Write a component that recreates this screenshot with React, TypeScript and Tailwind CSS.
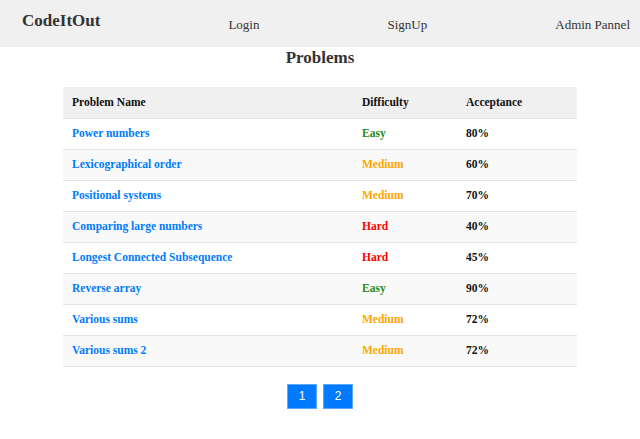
import React from "react";

const rows: { name: string; diff: "Easy" | "Medium" | "Hard"; acc: string }[] = [
  { name: "Power numbers", diff: "Easy", acc: "80%" },
  { name: "Lexicographical order", diff: "Medium", acc: "60%" },
  { name: "Positional systems", diff: "Medium", acc: "70%" },
  { name: "Comparing large numbers", diff: "Hard", acc: "40%" },
  { name: "Longest Connected Subsequence", diff: "Hard", acc: "45%" },
  { name: "Reverse array", diff: "Easy", acc: "90%" },
  { name: "Various sums", diff: "Medium", acc: "72%" },
  { name: "Various sums 2", diff: "Medium", acc: "72%" },
];

const diffClass: Record<string, string> = {
  Easy: "text-[#228b22]",
  Medium: "text-[#ffa500]",
  Hard: "text-[#ff0000]",
};

export default function App() {
  return (
    <div className="min-h-[439px] w-[640px] bg-white font-['Liberation_Serif',serif] text-[#333]">
      <nav className="flex h-[47px] items-start justify-between bg-[#f0f0f0] pl-[22px] pr-[10px]">
        <span className="mt-[11px] text-[17px] font-bold leading-[20px] text-[#333]">CodeItOut</span>
        <span className="mt-[17px] text-[13px] leading-[16px] text-[#333]">Login</span>
        <span className="mt-[17px] text-[13px] leading-[16px] text-[#333]">SignUp</span>
        <span className="mt-[17px] text-[13px] leading-[16px] text-[#333]">Admin Pannel</span>
      </nav>
      <h1 className="mt-[1px] mb-[19px] text-center text-[17px] font-bold leading-[20px] text-[#333]">Problems</h1>
      <div className="flex justify-center">
        <table className="w-[514px] table-fixed border-collapse text-[11.5px] font-bold">
          <colgroup>
            <col className="w-[290px]" />
            <col className="w-[104px]" />
            <col className="w-[120px]" />
          </colgroup>
          <thead>
            <tr className="h-[31px] border-b border-[#e4e4e4] bg-[#f0f0f0] text-left text-[#111]">
              <th className="px-[9px] py-0 font-bold">Problem Name</th>
              <th className="px-[9px] py-0 font-bold">Difficulty</th>
              <th className="px-[9px] py-0 font-bold">Acceptance</th>
            </tr>
          </thead>
          <tbody>
            {rows.map((r, i) => (
              <tr
                key={r.name}
                className={`h-[31px] border-b border-[#e4e4e4] ${i % 2 === 1 ? "bg-[#f9f9f9]" : "bg-white"}`}
              >
                <td className="px-[9px] py-0 text-[#007bff]">{r.name}</td>
                <td className={`px-[9px] py-0 ${diffClass[r.diff]}`}>{r.diff}</td>
                <td className="px-[9px] py-0 text-[#111]">{r.acc}</td>
              </tr>
            ))}
          </tbody>
        </table>
      </div>
      <div className="mt-[17px] flex justify-center gap-[6px]">
        {["1", "2"].map((n) => (
          <button
            key={n}
            className="flex h-[25px] w-[30px] items-center justify-center border border-[#5aa9ff] bg-[#007bff] font-['Liberation_Sans',sans-serif] text-[12px] text-white"
          >
            {n}
          </button>
        ))}
      </div>
    </div>
  );
}
